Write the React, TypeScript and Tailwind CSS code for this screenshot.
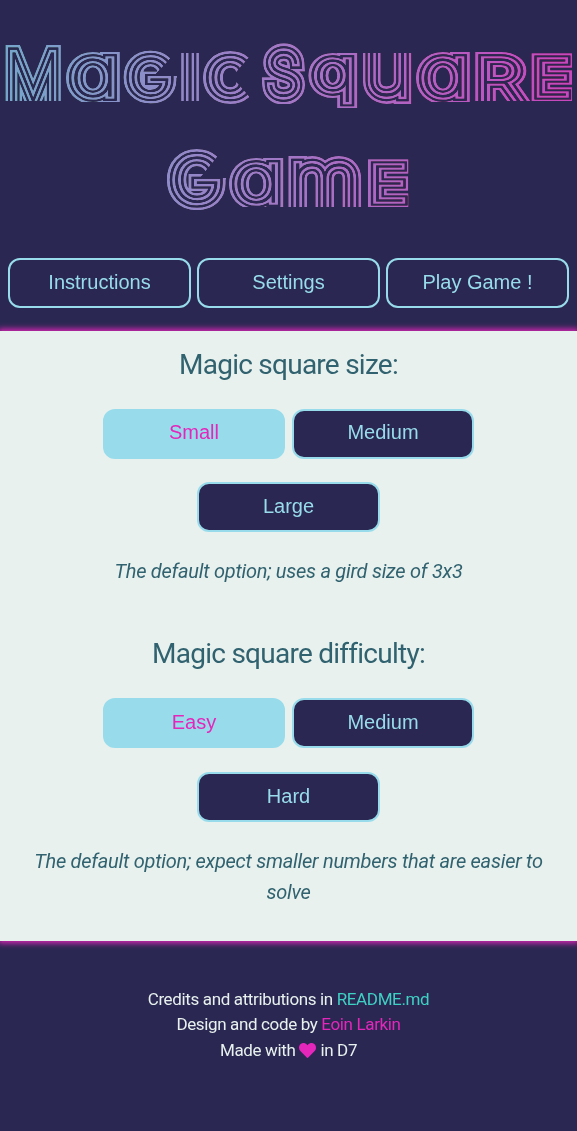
import { type CSSProperties, type ReactNode } from "react";

// Ink width and left bearing of each hairline letter, in ems.
const metrics: Record<string, [number, number]> = {
  M: [0.72, 0.108],
  a: [0.4, 0.083],
  G: [0.58, 0.085],
  I: [0.02, 0.12],
  C: [0.57, 0.085],
  S: [0.47, 0.07],
  q: [0.43, 0.067],
  u: [0.41, 0.094],
  R: [0.44, 0.106],
  E: [0.4, 0.11],
  m: [0.7, 0.087],
};

type Glyph = { c: string; shape?: string; left: number; width: number; y: number; size: number; k: number };

const glyphs: Glyph[] = [
  { c: "M", left: 5.5, width: 58, y: 101, size: 66, k: 1 },
  { c: "a", left: 68, width: 51.5, y: 95.5, size: 67, k: 0.85 },
  { c: "g", shape: "G", left: 124.5, width: 52, y: 95.8, size: 51, k: 0.9 },
  { c: "i", shape: "I", left: 182, width: 17, y: 107, size: 84, k: 1 },
  { c: "c", shape: "C", left: 204, width: 52, y: 95.5, size: 50, k: 0.95 },
  { c: "S", left: 262, width: 43, y: 95.5, size: 60, k: 1 },
  { c: "q", left: 309, width: 49, y: 90, size: 55, k: 0.85 },
  { c: "u", left: 363, width: 49.5, y: 95.5, size: 83, k: 0.95 },
  { c: "a", left: 418, width: 51.5, y: 95.5, size: 67, k: 0.85 },
  { c: "r", shape: "R", left: 475, width: 52, y: 101, size: 57, k: 0.85 },
  { c: "e", shape: "E", left: 531.5, width: 42, y: 94.6, size: 48.4, k: 0.8 },
  { c: "G", left: 168, width: 58, y: 201.5, size: 61, k: 0.95 },
  { c: "a", left: 231, width: 52, y: 201.5, size: 67, k: 0.85 },
  { c: "m", left: 288, width: 74.5, y: 207, size: 78, k: 0.95 },
  { c: "e", shape: "E", left: 368, width: 42, y: 200.6, size: 48.4, k: 0.8 },
];

// Areas that the strokes may fill; they leave the mouths of G and C open and cut stems off flat.
const bands = [
  "0,45 64,45 64,101 0,101",
  "64,50 120,50 120,102 64,102",
  "120,48 180,48 154,76 177,76 177,104 120,104",
  "180,53 201,53 201,101 180,101",
  "201,48 257,48 232,77 257,105 201,105",
  "259,40 307,40 307,104 259,104",
  "307,51 359,51 359,108 307,108",
  "359,53 415,53 415,104 359,104",
  "415,50 472,50 472,102 415,102",
  "472,52 572,52 572,101 472,101",
  "160,146 226,146 200,178 226,178 226,210 160,210",
  "228,155 408.5,155 408.5,207 228,207",
];

function GlyphText({ g }: { g: Glyph }) {
  const [ink, bearing] = metrics[g.shape ?? g.c];
  const half = 8 * g.k;
  const sx = g.width / (ink * g.size + 2 * half);
  const x = g.left + sx * (half - bearing * g.size);
  return (
    <text
      transform={`translate(${x} ${g.y}) scale(${sx} 1)`}
      fontSize={g.size}
      className={g.shape ? "uppercase" : undefined}
      style={{ strokeWidth: `calc(var(--w) * ${g.k}px)` }}
    >
      {g.c}
    </text>
  );
}

const layer = (w: number) => ({ "--w": w }) as CSSProperties;

function Title() {
  return (
    <h1>
      <svg width="577" height="258" viewBox="0 0 577 258" className="isolate block bg-black mix-blend-lighten">
        <defs>
          <linearGradient id="neon" x1="0" y1="0" x2="1" y2="0">
            <stop offset="0" stopColor="#75a6cb" />
            <stop offset="0.5" stopColor="#a276c6" />
            <stop offset="1" stopColor="#c846bd" />
          </linearGradient>
          <clipPath id="bands">
            {bands.map((points) => (
              <polygon key={points} points={points} />
            ))}
          </clipPath>
        </defs>
        <g clipPath="url(#bands)" className="font-['Inter',sans-serif] font-thin [font-feature-settings:'cv11']">
          <g stroke="#fff" style={layer(16.6)}>
            <g id="wordmark">
              {glyphs.map((g, i) => (
                <GlyphText key={i} g={g} />
              ))}
            </g>
          </g>
          <use href="#wordmark" stroke="#000" style={layer(11)} />
          <use href="#wordmark" stroke="#fff" style={layer(6.7)} />
          <use href="#wordmark" stroke="#000" style={layer(1.1)} />
        </g>
        <rect width="577" height="258" fill="url(#neon)" className="mix-blend-multiply" />
      </svg>
    </h1>
  );
}

function Button({ children, active = false }: { children: ReactNode; active?: boolean }) {
  return (
    <button
      className={`h-[50px] w-[182.5px] rounded-xl border-2 border-[#98dcec] pb-[3px] font-['Liberation_Sans',sans-serif] text-[20px] ${
        active ? "bg-[#98dcec] text-[#e426bb]" : "bg-[#2a2852] text-[#98dcec]"
      }`}
    >
      {children}
    </button>
  );
}

function Option({ title, labels, note }: { title: string; labels: string[]; note: string }) {
  return (
    <section className="flex flex-col items-center text-[#31626f]">
      <h2 className="mb-[23px] text-[28px] leading-[42px] tracking-[-0.75px]">{title}</h2>
      <div className="flex w-[400px] flex-wrap justify-center gap-x-[6.5px] gap-y-[23.8px]">
        {labels.map((label, i) => (
          <Button key={label} active={i === 0}>
            {label}
          </Button>
        ))}
      </div>
      <p className="mt-[23.8px] px-5 text-center text-[20px] leading-[31px] tracking-[-0.26px] italic">{note}</p>
    </section>
  );
}

export default function App() {
  return (
    <div className="flex min-h-[1131px] w-[577px] flex-col bg-[#2a2852] font-['Roboto',sans-serif] font-normal">
      <header className="h-[331px]">
        <Title />
        <nav className="flex justify-center gap-[6.5px]">
          <Button>Instructions</Button>
          <Button>Settings</Button>
          <Button>Play Game !</Button>
        </nav>
      </header>
      <main className="relative flex h-[610px] flex-col gap-[46.3px] bg-[#e8f1ee] pt-[12.5px] shadow-[0_0_6px_2px_#e426bb]">
        <Option
          title="Magic square size:"
          labels={["Small", "Medium", "Large"]}
          note="The default option; uses a gird size of 3x3"
        />
        <Option
          title="Magic square difficulty:"
          labels={["Easy", "Medium", "Hard"]}
          note="The default option; expect smaller numbers that are easier to solve"
        />
      </main>
      <footer className="flex flex-col items-center pt-[45.5px] text-[17px] leading-[25.5px] tracking-[-0.36px] text-[#e8f1ee]">
        <p>
          Credits and attributions in <a className="text-[#3fd0c4]">README.md</a>
        </p>
        <p>
          Design and code by <a className="text-[#e426bb]">Eoin Larkin</a>
        </p>
        <p className="flex items-center gap-1">
          Made with
          <svg viewBox="0 0 512 512" className="size-[17px] fill-[#e426bb]">
            <path d="M462.3 62.6C407.5 15.9 326 24.3 275.7 76.2L256 96.5l-19.7-20.3C186.1 24.3 104.5 15.9 49.7 62.6c-62.8 53.6-66.1 149.8-9.9 207.9l193.5 199.8c12.5 12.9 32.8 12.9 45.3 0l193.5-199.8c56.3-58.1 53-154.3-9.8-207.9z" />
          </svg>
          in D7
        </p>
      </footer>
    </div>
  );
}
